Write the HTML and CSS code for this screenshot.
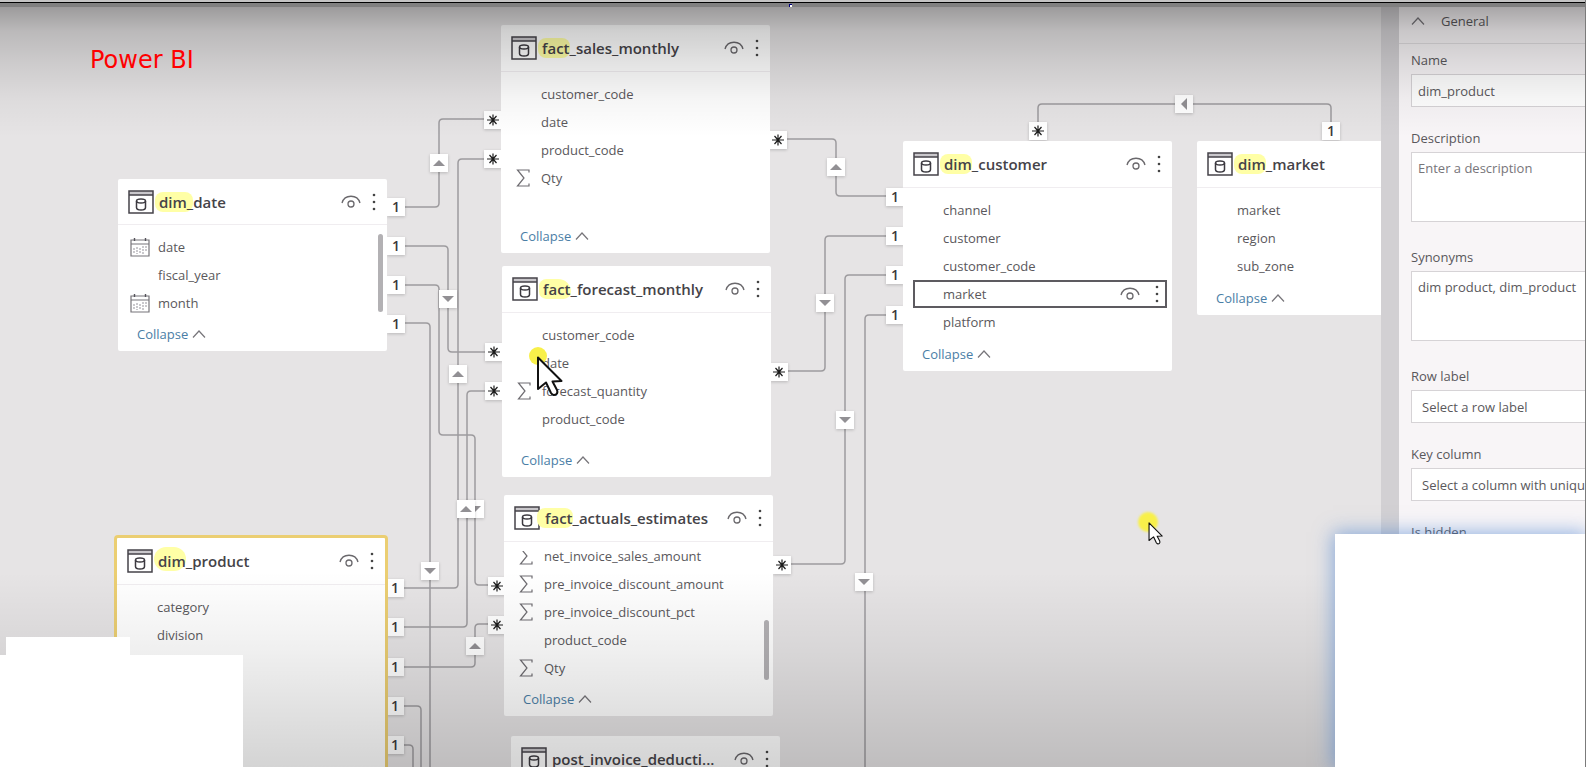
FILE: index.html
```html
<!DOCTYPE html>
<html lang="en">
<head>
<meta charset="utf-8">
<title>Power BI model view</title>
<link rel="stylesheet" href="styles.css">
</head>
<body>
<svg class="defs" aria-hidden="true">
  <symbol id="table" viewBox="0 0 26 24">
    <path d="M1 1h24v4H1z" fill="#c9c7cb"/>
    <path d="M1 1h24v22H1z M1 5h24" fill="none" stroke="#45434a" stroke-width="1.5"/>
    <path d="M8.500 11v6.500q0 2.500 4.500 2.500t4.500-2.500V11" fill="none" stroke="#3c3a40" stroke-width="1.500"/>
    <ellipse cx="13" cy="11" rx="4.500" ry="2" fill="none" stroke="#3c3a40" stroke-width="1.500"/>
  </symbol>
  <symbol id="eye" viewBox="0 0 20 14">
    <path d="M1 8C3.500-1 16.500-1 19 8" fill="none" stroke="#6a686c" stroke-width="1.300"/>
    <circle cx="10" cy="9" r="3" fill="none" stroke="#6a686c" stroke-width="1.300"/>
  </symbol>
  <symbol id="more" viewBox="0 0 4 18">
    <circle cx="2" cy="2" r="1.300" fill="#444"/><circle cx="2" cy="9" r="1.300" fill="#444"/><circle cx="2" cy="16" r="1.300" fill="#444"/>
  </symbol>
  <symbol id="sigma" viewBox="0 0 14 18">
    <path d="M13 3.500V1H1.500L8 9l-6.500 8H13v-2.500" fill="none" stroke="#6f6d72" stroke-width="1.200"/>
  </symbol>
  <symbol id="calendar" viewBox="0 0 20 19">
    <path d="M1 2h18v16H1z M1 6h18" fill="none" stroke="#77757a" stroke-width="1.200"/>
    <path d="M4.500 0v3M15.500 0v3" stroke="#55535a" stroke-width="1.400"/>
    <path d="M4 10v6M7 9v7M10 10v6M13 8v8M16 8v5" stroke="#b5b3b8" stroke-width="1.400" stroke-dasharray="2 1"/>
  </symbol>
  <symbol id="chevron" viewBox="0 0 14 8">
    <path d="M1 7.500L7 1l6 6.500" fill="none" stroke="currentColor" stroke-width="1.200"/>
  </symbol>
  <symbol id="star" viewBox="0 0 12 12">
    <path d="M6 0.500v11M0 6h12M2.500 2l7 8M9.500 2l-7 8" stroke="#1c1c1c" stroke-width="1.200"/>
  </symbol>
  <symbol id="arrow" viewBox="0 0 12 6"><path d="M0 6L6 0l6 6z" fill="#929094"/></symbol>
  <symbol id="pointer" viewBox="0 0 26 41">
    <path d="M1.500 1.500V33l8-6.500 5 10.500q2.500 3.500 5.500 1 1.500-1.500 0.500-4L16 25.500l9-0.500z" fill="#fff" stroke="#111" stroke-width="2" stroke-linejoin="round"/>
  </symbol>
</svg>

<div class="app">
  <div class="frame"></div>
  <div class="workspace">
    <main class="canvas">
      <svg class="links" aria-hidden="true">
        <path d="M404 207H435Q439 207 439 203V123Q439 119 443 119H486"/>
        <path d="M404 246H444Q448 246 448 250V348Q448 352 452 352H486"/>
        <path d="M404 285H435Q439 285 439 289V431Q439 435 443 435H471Q475 435 475 439V581Q475 585 479 585H490"/>
        <path d="M404 323H426Q430 323 430 327V1000"/>
        <path d="M404 588H454Q458 588 458 584V163Q458 159 462 159H486"/>
        <path d="M404 627H463Q467 627 467 623V395Q467 391 471 391H486"/>
        <path d="M404 667H471Q475 667 475 663V628Q475 624 479 624H490"/>
        <path d="M404 706H417Q421 706 421 710V1000"/>
        <path d="M404 745H409Q413 745 413 749V1000"/>
        <path d="M786 139H832Q836 139 836 143V192Q836 196 840 196H888"/>
        <path d="M786 371H821Q825 371 825 367V240Q825 236 829 236H888"/>
        <path d="M790 564H841Q845 564 845 560V279Q845 275 849 275H888"/>
        <path d="M888 315H869Q865 315 865 319V1000"/>
        <path d="M1038 124V108Q1038 104 1042 104H1327Q1331 104 1331 108V124"/>
      </svg>

      <h1 class="brand">Power BI</h1>

      <span class="tag t-a"><svg class="tri"><use href="#arrow"/></svg></span>
      <span class="tag t-b"><svg class="tri down"><use href="#arrow"/></svg></span>
      <span class="tag t-c"><svg class="tri down"><use href="#arrow"/></svg></span>
      <span class="tag t-d"><svg class="tri down"><use href="#arrow"/></svg></span>
      <span class="tag t-e"><svg class="tri"><use href="#arrow"/></svg></span>
      <span class="tag t-f"><svg class="tri"><use href="#arrow"/></svg></span>
      <span class="tag t-g"><svg class="tri"><use href="#arrow"/></svg></span>
      <span class="tag t-j"><svg class="tri"><use href="#arrow"/></svg></span>
      <span class="tag t-k"><svg class="tri down"><use href="#arrow"/></svg></span>
      <span class="tag t-l"><svg class="tri down"><use href="#arrow"/></svg></span>
      <span class="tag t-m"><svg class="tri down"><use href="#arrow"/></svg></span>
      <span class="tag t-n"><svg class="tri left"><use href="#arrow"/></svg></span>

      <span class="tag one-a">1</span>
      <span class="tag one-b">1</span>
      <span class="tag one-c">1</span>
      <span class="tag one-d">1</span>
      <span class="tag one-e">1</span>
      <span class="tag one-f">1</span>
      <span class="tag one-g">1</span>
      <span class="tag one-h">1</span>
      <span class="tag one-i">1</span>
      <span class="tag one-j">1</span>
      <span class="tag one-k">1</span>
      <span class="tag one-l">1</span>
      <span class="tag one-m">1</span>
      <span class="tag one-n">1</span>

      <span class="tag many-a"><svg class="star"><use href="#star"/></svg></span>
      <span class="tag many-b"><svg class="star"><use href="#star"/></svg></span>
      <span class="tag many-c"><svg class="star"><use href="#star"/></svg></span>
      <span class="tag many-d"><svg class="star"><use href="#star"/></svg></span>
      <span class="tag many-e"><svg class="star"><use href="#star"/></svg></span>
      <span class="tag many-f"><svg class="star"><use href="#star"/></svg></span>
      <span class="tag many-j"><svg class="star"><use href="#star"/></svg></span>
      <span class="tag many-k"><svg class="star"><use href="#star"/></svg></span>
      <span class="tag many-l"><svg class="star"><use href="#star"/></svg></span>
      <span class="tag many-n"><svg class="star"><use href="#star"/></svg></span>

      <section class="card dim-date">
        <header class="head"><svg class="i-table"><use href="#table"/></svg><h2 class="title"><mark class="mark">dim_</mark>date</h2><svg class="i-eye"><use href="#eye"/></svg><svg class="i-more"><use href="#more"/></svg></header>
        <ul class="rows">
          <li class="row"><svg class="i-cal"><use href="#calendar"/></svg><span class="field">date</span></li>
          <li class="row"><span class="field">fiscal_year</span></li>
          <li class="row"><svg class="i-cal"><use href="#calendar"/></svg><span class="field">month</span></li>
        </ul>
        <button class="collapse">Collapse<svg class="i-chev"><use href="#chevron"/></svg></button>
        <i class="thumb thumb-date"></i>
      </section>

      <section class="card dim-product">
        <header class="head"><svg class="i-table"><use href="#table"/></svg><h2 class="title"><mark class="mark tall">dim</mark>_product</h2><svg class="i-eye"><use href="#eye"/></svg><svg class="i-more"><use href="#more"/></svg></header>
        <ul class="rows">
          <li class="row"><span class="field">category</span></li>
          <li class="row"><span class="field">division</span></li>
        </ul>
      </section>

      <section class="card fact-sales">
        <header class="head"><svg class="i-table"><use href="#table"/></svg><h2 class="title"><mark class="mark">fact</mark>_sales_monthly</h2><svg class="i-eye"><use href="#eye"/></svg><svg class="i-more"><use href="#more"/></svg></header>
        <ul class="rows">
          <li class="row"><span class="field">customer_code</span></li>
          <li class="row"><span class="field">date</span></li>
          <li class="row"><span class="field">product_code</span></li>
          <li class="row"><svg class="i-sigma"><use href="#sigma"/></svg><span class="field">Qty</span></li>
        </ul>
        <button class="collapse">Collapse<svg class="i-chev"><use href="#chevron"/></svg></button>
      </section>

      <section class="card fact-forecast">
        <header class="head"><svg class="i-table"><use href="#table"/></svg><h2 class="title"><mark class="mark bump">fact</mark>_forecast_monthly</h2><svg class="i-eye"><use href="#eye"/></svg><svg class="i-more"><use href="#more"/></svg></header>
        <ul class="rows">
          <li class="row"><span class="field">customer_code</span></li>
          <li class="row"><span class="field">date</span></li>
          <li class="row"><svg class="i-sigma"><use href="#sigma"/></svg><span class="field">forecast_quantity</span></li>
          <li class="row"><span class="field">product_code</span></li>
        </ul>
        <button class="collapse">Collapse<svg class="i-chev"><use href="#chevron"/></svg></button>
      </section>

      <section class="card fact-actuals">
        <header class="head"><svg class="i-table"><use href="#table"/></svg><h2 class="title"><mark class="mark wide">fact</mark>_actuals_estimates</h2><svg class="i-eye"><use href="#eye"/></svg><svg class="i-more"><use href="#more"/></svg></header>
        <ul class="rows scrolled">
          <li class="row"><svg class="i-sigma cut"><use href="#sigma"/></svg><span class="field">net_invoice_sales_amount</span></li>
          <li class="row"><svg class="i-sigma"><use href="#sigma"/></svg><span class="field">pre_invoice_discount_amount</span></li>
          <li class="row"><svg class="i-sigma"><use href="#sigma"/></svg><span class="field">pre_invoice_discount_pct</span></li>
          <li class="row"><span class="field">product_code</span></li>
          <li class="row"><svg class="i-sigma"><use href="#sigma"/></svg><span class="field">Qty</span></li>
        </ul>
        <button class="collapse">Collapse<svg class="i-chev"><use href="#chevron"/></svg></button>
        <i class="thumb thumb-actuals"></i>
      </section>

      <section class="card post-invoice">
        <header class="head"><svg class="i-table"><use href="#table"/></svg><h2 class="title">post_invoice_deducti...</h2><svg class="i-eye"><use href="#eye"/></svg><svg class="i-more"><use href="#more"/></svg></header>
      </section>

      <section class="card dim-customer">
        <header class="head"><svg class="i-table"><use href="#table"/></svg><h2 class="title"><mark class="mark">dim</mark>_customer</h2><svg class="i-eye"><use href="#eye"/></svg><svg class="i-more"><use href="#more"/></svg></header>
        <ul class="rows">
          <li class="row"><span class="field">channel</span></li>
          <li class="row"><span class="field">customer</span></li>
          <li class="row"><span class="field">customer_code</span></li>
          <li class="row focused"><span class="field">market</span><svg class="i-eye"><use href="#eye"/></svg><svg class="i-more"><use href="#more"/></svg></li>
          <li class="row"><span class="field">platform</span></li>
        </ul>
        <button class="collapse">Collapse<svg class="i-chev"><use href="#chevron"/></svg></button>
      </section>

      <section class="card dim-market">
        <header class="head"><svg class="i-table"><use href="#table"/></svg><h2 class="title"><mark class="mark">dim</mark>_market</h2></header>
        <ul class="rows">
          <li class="row"><span class="field">market</span></li>
          <li class="row"><span class="field">region</span></li>
          <li class="row"><span class="field">sub_zone</span></li>
        </ul>
        <button class="collapse">Collapse<svg class="i-chev"><use href="#chevron"/></svg></button>
      </section>

      <i class="spot spot-big"></i>
      <svg class="cursor cursor-big"><use href="#pointer"/></svg>
      <i class="spot spot-small"></i>
      <svg class="cursor cursor-small"><use href="#pointer"/></svg>
    </main>

    <aside class="panel">
      <button class="section"><svg class="i-chev"><use href="#chevron"/></svg>General</button>
      <form class="form">
        <label class="label" for="name">Name</label>
        <input class="box" id="name" value="dim_product">
        <label class="label" for="desc">Description</label>
        <textarea class="box area" id="desc" placeholder="Enter a description"></textarea>
        <label class="label" for="syn">Synonyms</label>
        <textarea class="box area" id="syn">dim product, dim_product</textarea>
        <label class="label" for="rowlabel">Row label</label>
        <select class="box pick" id="rowlabel"><option>Select a row label</option></select>
        <label class="label" for="key">Key column</label>
        <select class="box pick" id="key"><option>Select a column with unique values</option></select>
        <span class="label">Is hidden</span>
      </form>
    </aside>
  </div>
  <div class="shade"></div>
  <div class="patch patch-tab"></div>
  <div class="patch patch-left"></div>
  <div class="patch patch-right"></div>
  <i class="handle handle-top"></i>
  <i class="handle handle-side"></i>
</div>
</body>
</html>
```
FILE: styles.css
```css
* { box-sizing: border-box; }
body { margin: 0; font-family: "Open Sans", "Noto Sans", sans-serif; font-size: 13px; color: #5a585c; }
.defs { position: absolute; width: 0; height: 0; }
.app { position: relative; display: flex; flex-direction: column; height: 100vh; overflow: hidden; border-right: 1px solid #7b7b7b; background: #e6e4e5; }
.frame { position: relative; z-index: 3; flex: none; height: 7px; background: #808080; border-top: 2px solid #c4c4c4; box-shadow: inset 0 1px 0 #000; }
.workspace { flex: 1; display: flex; min-height: 0; margin-top: -7px; }
.canvas { position: relative; flex: 1; overflow: hidden; }
.links { position: absolute; inset: 0; width: 100%; height: 100%; fill: none; stroke: #9d9b9e; stroke-width: 1.5; }
.brand { position: absolute; left: 90px; top: 46px; z-index: 4; margin: 0; font: 24px/28px "DejaVu Sans", sans-serif; color: #f00; }

.card { position: absolute; display: flex; flex-direction: column; width: 269px; background: #fff; border-radius: 2px; }
.dim-date { left: 118px; top: 179px; height: 172px; }
.dim-product { left: 114px; top: 535px; width: 274px; height: 300px; border: 3px solid #ebce72; border-radius: 4px; }
.fact-sales { left: 501px; top: 25px; height: 228px; }
.fact-forecast { left: 502px; top: 266px; height: 211px; }
.fact-actuals { left: 504px; top: 495px; height: 221px; }
.post-invoice { left: 511px; top: 736px; height: 200px; }
.dim-customer { left: 903px; top: 141px; height: 230px; }
.dim-market { left: 1197px; top: 141px; height: 174px; }

.head { display: flex; align-items: center; height: 47px; padding: 0 11px 0 10px; border-bottom: 1px solid #f0edf0; }
.title { flex: 1; margin: 0; padding-left: 5px; font-size: 15px; line-height: 20px; font-weight: 600; color: #454348; white-space: nowrap; }
.mark { color: inherit; background: #ffffa6; border-radius: 8px; margin-left: -4px; padding-left: 4px; }
.mark.tall { border-radius: 12px; padding-top: 4px; }
.mark.wide { margin-left: -8px; padding-left: 8px; }
.mark.bump { border-radius: 8px 14px 8px 8px; }
.i-table { width: 26px; height: 24px; }
.i-eye { flex: none; width: 20px; height: 14px; margin-right: 11px; }
.i-more { flex: none; width: 4px; height: 18px; }

.rows { list-style: none; margin: 0; padding: 8px 0 0; }
.rows.scrolled { padding-top: 0; }
.row { position: relative; display: flex; align-items: center; height: 28px; margin: 0 5px 0 10px; padding-left: 30px; }
.row.focused { border: 2px solid #5d5b60; padding: 0 6px 0 28px; }
.row.focused .field { flex: 1; }
.row.focused .i-eye { margin-right: 15px; }
.field { line-height: 20px; }
.i-cal { width: 20px; height: 19px; margin: 0 8px 0 -28px; }
.i-sigma { width: 14px; height: 18px; margin: 0 11px 0 -25px; }
.i-sigma.cut { clip-path: inset(4px 0 0); }
.collapse { display: flex; align-items: center; gap: 4px; height: 34px; margin: auto 0 0; padding: 0 0 0 19px; border: 0; background: none; font: inherit; color: #4a7ea6; }
.i-chev { width: 14px; height: 8px; color: #77757a; }
.thumb { position: absolute; width: 5px; border-radius: 3px; background: #b3b1b4; }
.thumb-date { right: 4px; top: 55px; height: 78px; }
.thumb-actuals { right: 4px; top: 125px; height: 60px; }

.tag { position: absolute; display: flex; align-items: center; justify-content: center; width: 18px; height: 18px; background: #fff; box-shadow: 0 1px 3px #0003; font-size: 14px; line-height: 18px; font-weight: 600; color: #3a383c; }
.tri { width: 12px; height: 6px; }
.tri.down { transform: rotate(180deg); }
.tri.left { transform: rotate(-90deg); }
.star { width: 12px; height: 12px; }
.t-a { left: 430px; top: 154px; }
.t-b { left: 439px; top: 290px; }
.t-c { left: 466px; top: 500px; }
.t-d { left: 421px; top: 562px; }
.t-e { left: 449px; top: 365px; }
.t-f { left: 457px; top: 500px; }
.t-g { left: 466px; top: 637px; }
.t-j { left: 827px; top: 158px; }
.t-k { left: 816px; top: 294px; }
.t-l { left: 836px; top: 411px; }
.t-m { left: 855px; top: 573px; }
.t-n { left: 1175px; top: 95px; }
.one-a { left: 387px; top: 198px; }
.one-b { left: 387px; top: 237px; }
.one-c { left: 387px; top: 276px; }
.one-d { left: 387px; top: 315px; }
.one-e { left: 386px; top: 579px; }
.one-f { left: 386px; top: 618px; }
.one-g { left: 386px; top: 658px; }
.one-h { left: 386px; top: 697px; }
.one-i { left: 386px; top: 736px; }
.one-j { left: 886px; top: 188px; }
.one-k { left: 886px; top: 227px; }
.one-l { left: 886px; top: 266px; }
.one-m { left: 886px; top: 306px; }
.one-n { left: 1322px; top: 122px; }
.many-a { left: 484px; top: 111px; }
.many-b { left: 484px; top: 150px; }
.many-c { left: 485px; top: 343px; }
.many-d { left: 485px; top: 382px; }
.many-e { left: 488px; top: 577px; }
.many-f { left: 488px; top: 616px; }
.many-j { left: 769px; top: 131px; }
.many-k { left: 770px; top: 363px; }
.many-l { left: 773px; top: 556px; }
.many-n { left: 1029px; top: 122px; }

.spot { position: absolute; border-radius: 50%; background: #f8f04a; }
.spot-big { left: 529px; top: 347px; width: 18px; height: 18px; }
.spot-small { left: 1138px; top: 512px; width: 20px; height: 20px; filter: blur(1px); }
.cursor { position: absolute; }
.cursor-big { left: 536px; top: 356px; width: 27px; height: 41px; }
.cursor-small { left: 1148px; top: 522px; width: 15px; height: 23px; }

.panel { flex: none; width: 204px; padding-top: 7px; overflow: hidden; background: #f8f5f7; border-left: 18px solid #d2d0d3; }
.section { display: flex; align-items: center; gap: 16px; width: 100%; height: 37px; padding: 0 0 8px 12px; border: 0; border-bottom: 1px solid #e0dee0; background: none; font: inherit; color: inherit; }
.form { display: flex; flex-direction: column; width: 280px; padding: 6px 0 0 12px; }
.label { line-height: 20px; margin-bottom: 4px; }
.box { height: 33px; margin: 0 0 21px; padding: 0 6px; border: 1px solid #d6d3d6; border-radius: 0; background: #fff; font: inherit; color: inherit; }
.area { height: 70px; margin-bottom: 25px; padding-top: 6px; resize: none; overflow: hidden; }
.area::placeholder { color: #77757a; }
.pick { appearance: none; padding-left: 10px; }

.shade { position: absolute; inset: 7px 0 0; pointer-events: none; background: linear-gradient(#00000052, #00000030 24px, #0000001c 56px, #0000000a 92px, #0000 130px), linear-gradient(to top, #0000002b, #00000022 40px, #00000010 115px, #0000 195px); }
.patch { position: absolute; background: #fff; }
.patch-tab { left: 6px; top: 637px; width: 124px; height: 18px; }
.patch-left { left: 0; top: 655px; width: 243px; bottom: 0; }
.patch-right { left: 1335px; right: 0; top: 534px; bottom: 0; box-shadow: 0 0 18px 2px #3f7cd08c; }
.handle { position: absolute; z-index: 4; width: 3px; height: 3px; background: #fff; border: solid #000080; border-width: 1px 0 0 1px; }
.handle-top { left: 789px; top: 4px; }
.handle-side { right: -1px; top: 439px; width: 1px; }
```
